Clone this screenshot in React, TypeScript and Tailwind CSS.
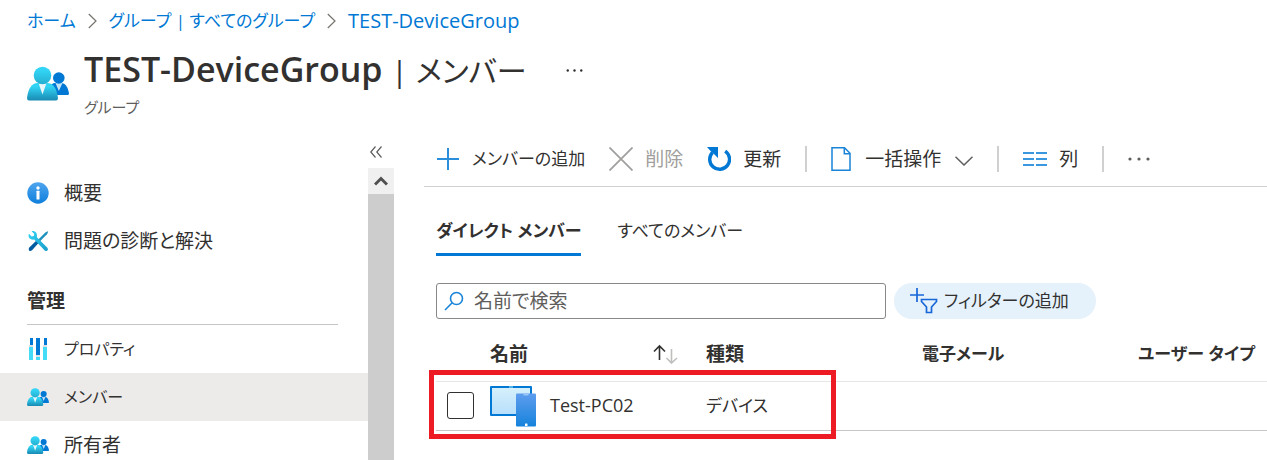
import { useId, useState } from "react";
import type { ReactNode } from "react";

function PeopleIcon({ className }: { className?: string }) {
  const id = useId();
  return (
    <svg viewBox="0 0 42 34" className={className} aria-hidden="true">
      <defs>
        <linearGradient id={`${id}b`} x1="0" y1="0" x2="0" y2="1">
          <stop offset="0.2" stopColor="#32d4f5" />
          <stop offset="1" stopColor="#198ab3" />
        </linearGradient>
        <linearGradient id={`${id}h`} x1="0" y1="0" x2="0" y2="1">
          <stop offset="0.2" stopColor="#32d4f5" />
          <stop offset="1" stopColor="#25aed0" />
        </linearGradient>
      </defs>
      <path d="M24 28.500H40.500Q42 28.500 42 27C41 20.500 38 16.500 34.500 16.500H28C25.500 16.500 24 18 22 21Z" fill="#0078d4" />
      <path d="M28.500 16.500H35.500L31.800 24.500Z" fill="#c3e4f7" />
      <circle cx="31.800" cy="11.500" r="5.800" fill="#0078d4" />
      <path d="M2 34H29Q31 34 31 31.500C30 22 26 16.500 20.500 16.500H10.500C5 16.500 1 22 0 31.500Q0 34 2 34Z" fill={`url(#${id}b)`} />
      <path d="M11.500 16.500H19.500L15.500 28Z" fill="#e9f7fb" />
      <circle cx="15.500" cy="9" r="8.800" fill={`url(#${id}h)`} />
    </svg>
  );
}

function InfoIcon() {
  return (
    <svg viewBox="0 0 22 22" className="size-[22px]" aria-hidden="true">
      <defs>
        <linearGradient id="info-bg" x1="0" y1="0" x2="0" y2="1">
          <stop offset="0" stopColor="#4fa5ee" />
          <stop offset="1" stopColor="#0f7fdc" />
        </linearGradient>
      </defs>
      <circle cx="11" cy="11" r="10.700" fill="url(#info-bg)" />
      <circle cx="11" cy="6" r="1.700" fill="#fff" />
      <rect x="9.500" y="8.800" width="3" height="8.700" rx="0.500" fill="#fff" />
    </svg>
  );
}

function ToolsIcon() {
  return (
    <svg viewBox="0 0 22 22" className="size-[22px]" aria-hidden="true">
      <defs>
        <linearGradient id="wrench" x1="0" y1="0" x2="1" y2="1">
          <stop offset="0" stopColor="#32d4f5" />
          <stop offset="1" stopColor="#1a9dc9" />
        </linearGradient>
      </defs>
      <path d="M20.800 1.200 21.200 1.800 20 4.200 11.300 13 9.600 11.300 18.300 2.500Z" fill="#2191bd" />
      <path d="M9.700 10.300 12 12.600 5 20.300Q3.300 21.600 2.100 20.400 1 19.200 2.300 17.600Z" fill="#005ba1" />
      <path d="M4.600 1.200 7.300 4 6.700 6 4.700 6.600 1.900 3.800C.7 6.900 2.600 10.300 7.200 9.600L17.700 20.400Q19.300 21.600 20.400 20.400 21.600 19.200 20.400 17.700L9.900 7.200C10.600 2.600 7.700.3 4.600 1.200Z" fill="url(#wrench)" />
    </svg>
  );
}

function PropertiesIcon() {
  return (
    <svg viewBox="0 0 22 22" className="size-[22px]" aria-hidden="true">
      <path d="M3 0H6V7H3ZM9 0H13V17H9ZM17 0H20V7H17Z" fill="#0078d4" />
      <path d="M2 9H6V22H2ZM9 19H13V22H9ZM16 9H20V22H16Z" fill="#45dcf8" />
      <path d="M2 7.500H6V8.500H2ZM9 17.500H13V18.500H9ZM16 7.500H20V8.500H16Z" fill="#b8c4cb" />
    </svg>
  );
}

function DeviceIcon() {
  return (
    <svg viewBox="0 0 46 42" className="h-[42px] w-[46px]" aria-hidden="true">
      <defs>
        <linearGradient id="screen" x1="0" y1="0" x2="0" y2="1">
          <stop offset="0" stopColor="#d5f0fb" />
          <stop offset="1" stopColor="#b8dffb" />
        </linearGradient>
        <linearGradient id="phone" x1="0" y1="0" x2="0" y2="1">
          <stop offset="0" stopColor="#5e9dee" />
          <stop offset="1" stopColor="#1683dc" />
        </linearGradient>
      </defs>
      <rect x="0" y="1" width="42" height="30" rx="1" fill="#0078d4" />
      <rect x="2" y="3" width="38" height="26" fill="url(#screen)" />
      <rect x="19" y="1.500" width="4" height="1" fill="#9fe4fb" />
      <rect x="26" y="8.500" width="20" height="33" rx="1" fill="url(#phone)" />
      <rect x="33.500" y="9.300" width="5" height="1" fill="#b7dcfa" />
      <rect x="35" y="38.500" width="2.500" height="2.500" rx="0.500" fill="#fff" />
    </svg>
  );
}

function RefreshIcon() {
  return (
    <svg viewBox="0 0 24 26" className="h-[26px] w-6" aria-hidden="true">
      <path d="M18.200 5.200A9.900 9.900 0 1 1 5.500 6.500" fill="none" stroke="#0078d4" strokeWidth="3.400" />
      <path d="M0 1H11V12L7.500 8.500 4 5.500Z" fill="#0078d4" />
    </svg>
  );
}

function FileIcon() {
  return (
    <svg viewBox="0 0 20 24" className="h-6 w-5" fill="none" stroke="#1a84d8" strokeWidth="1.500" aria-hidden="true">
      <path d="M1 .8H13.500L19 6.300V23.200H1Z" />
      <path d="M13.300 1V6.700H19" />
    </svg>
  );
}

function ColumnsIcon() {
  return (
    <svg viewBox="0 0 24 14" className="h-3.5 w-6" aria-hidden="true">
      <path d="M0 0H11V2H0ZM13 0H24V2H13ZM0 6H11V8H0ZM13 6H24V8H13ZM0 12H11V14H0ZM13 12H24V14H13Z" fill="#3b97de" />
    </svg>
  );
}

function FilterIcon() {
  return (
    <svg viewBox="0 0 28 26" className="h-[26px] w-7" fill="none" stroke="#1767d8" strokeWidth="1.700" aria-hidden="true">
      <path d="M7 0V14M0 7H14" />
      <path d="M11.500 11.500H26.500V13.500L21.500 19V24.500H16.500V19L11.500 13.500Z" />
    </svg>
  );
}

function Dots({ color, className }: { color: string; className: string }) {
  return (
    <svg viewBox="0 0 22 4" className={className} fill={color} aria-hidden="true">
      <circle cx="2" cy="2" r="1.600" />
      <circle cx="11" cy="2" r="1.600" />
      <circle cx="20" cy="2" r="1.600" />
    </svg>
  );
}

function Crumb() {
  return (
    <svg viewBox="0 0 9 16" className="h-4 w-[9px]" fill="none" stroke="#76736f" strokeWidth="1.200" aria-hidden="true">
      <path d="M.8 1 8 8 .8 15" />
    </svg>
  );
}

function Separator() {
  return <div className="ml-6 h-[26px] w-0.5 bg-[#d0d0d0]" />;
}

type NavItemProps = {
  icon: ReactNode;
  label: string;
  active?: boolean;
  small?: boolean;
};

function NavItem({ icon, label, active, small }: NavItemProps) {
  return (
    <li>
      <a
        href="#"
        aria-current={active ? "page" : undefined}
        className={`flex h-12 items-center gap-[15px] pl-[27px] ${small ? "text-[16px]" : "text-[19px]"} ${active ? "bg-[#edebe9]" : ""}`}
      >
        {icon}
        <span>{label}</span>
      </a>
    </li>
  );
}

const menuPeople = <PeopleIcon className="h-[18px] w-[22px]" />;

export default function App() {
  const [search, setSearch] = useState("");
  const [checked, setChecked] = useState(false);

  return (
    <div className="flex h-screen flex-col overflow-hidden bg-white font-['Open_Sans','Noto_Sans_CJK_JP',sans-serif] text-[#323130] [font-feature-settings:'palt'] [&_*]:whitespace-nowrap">
      <header className="shrink-0">
        <nav aria-label="breadcrumb" className="flex h-[42px] items-center gap-3 pl-[27px] text-[17px] text-[#0078d4]">
          <a href="#">ホーム</a>
          <Crumb />
          <a href="#">グループ | すべてのグループ</a>
          <Crumb />
          <a href="#" className="text-[20px]">TEST-DeviceGroup</a>
        </nav>
        <div className="flex h-[90px] items-start pl-[27px]">
          <PeopleIcon className="mt-6 h-[35px] w-[42px]" />
          <div className="ml-[15px]">
            <div className="flex h-14 items-center gap-10">
              <h1 className="text-[34px] leading-[56px] font-semibold">
                TEST-DeviceGroup <span className="text-[30px] font-normal">| メンバー</span>
              </h1>
              <button type="button" aria-label="その他">
                <Dots color="#323130" className="h-[3px] w-[17px]" />
              </button>
            </div>
            <p className="text-[15px] leading-[18px] text-[#605e5c]">グループ</p>
          </div>
        </div>
      </header>

      <div className="flex min-h-0 flex-1">
        <aside className="flex w-[394px] shrink-0 flex-col">
          <div className="flex h-9 shrink-0 items-center justify-end pr-3">
            <button type="button" aria-label="折りたたむ">
              <svg viewBox="0 0 12 12" className="mt-1 size-3" fill="none" stroke="#605e5c" strokeWidth="1.200">
                <path d="M5.500.5.800 6 5.500 11.500M11.500.5 6.800 6 11.500 11.500" />
              </svg>
            </button>
          </div>
          <div className="flex min-h-0 flex-1">
            <nav className="flex-1 overflow-hidden pt-px">
              <ul>
                <NavItem icon={<InfoIcon />} label="概要" />
                <NavItem icon={<ToolsIcon />} label="問題の診断と解決" />
              </ul>
              <h2 className="mr-[30px] ml-[27px] h-[60px] border-b border-[#c8c6c4] pt-5 text-[19px] leading-8 font-bold">管理</h2>
              <ul>
                <NavItem icon={<PropertiesIcon />} label="プロパティ" small />
                <NavItem icon={menuPeople} label="メンバー" active small />
                <NavItem icon={menuPeople} label="所有者" />
              </ul>
            </nav>
            <div className="w-[26px] bg-[#cdcdcd]">
              <div className="flex h-[26px] items-center justify-center bg-[#f0f0f0]">
                <svg viewBox="0 0 14 10" className="h-2.5 w-3.5" fill="none" stroke="#505050" strokeWidth="3" aria-hidden="true">
                  <path d="M1 8.500 7 2.500 13 8.500" />
                </svg>
              </div>
            </div>
          </div>
        </aside>

        <main className="ml-[30px] min-w-0 flex-1">
          <div className="flex h-[55px] items-center border-b border-[#d2d0ce] pl-3 text-[19px]">
            <button type="button" className="flex items-center gap-3 text-[17px]">
              <svg viewBox="0 0 24 24" className="size-6" stroke="#2b8edb" strokeWidth="2" aria-hidden="true">
                <path d="M12 1V23M1 12H23" />
              </svg>
              メンバーの追加
            </button>
            <button type="button" disabled className="ml-6 flex items-center gap-3 text-[#a19f9d]">
              <svg viewBox="0 0 24 24" className="size-6" stroke="#a19f9d" strokeWidth="1.800" aria-hidden="true">
                <path d="M.5.5 23.500 23.500M23.500.5.5 23.500" />
              </svg>
              削除
            </button>
            <button type="button" className="ml-6 flex items-center gap-3">
              <RefreshIcon />
              更新
            </button>
            <Separator />
            <button type="button" className="ml-6 flex items-center gap-3.5">
              <FileIcon />
              一括操作
              <svg viewBox="0 0 18 10" className="mt-1 h-2.5 w-[18px]" fill="none" stroke="#605e5c" strokeWidth="1.500" aria-hidden="true">
                <path d="M.5.8 9 9 17.500.8" />
              </svg>
            </button>
            <Separator />
            <button type="button" className="ml-6 flex items-center gap-3">
              <ColumnsIcon />
              列
            </button>
            <Separator />
            <button type="button" aria-label="その他のコマンド" className="ml-6">
              <Dots color="#605e5c" className="h-1 w-[22px]" />
            </button>
          </div>

          <div className="pl-3">
            <div role="tablist" className="flex gap-9 pt-6 text-[17px] leading-10">
              <button type="button" role="tab" aria-selected="true" className="border-b-3 border-[#0078d4] pb-0.5 font-bold">
                ダイレクト メンバー
              </button>
              <button type="button" role="tab" aria-selected="false" className="border-b-3 border-transparent pb-0.5">
                すべてのメンバー
              </button>
            </div>

            <div className="mt-[27px] flex gap-2">
              <label className="flex h-9 w-[450px] items-center gap-2.5 rounded-[3px] border border-[#8a8886] px-[7px]">
                <svg viewBox="0 0 20 20" className="size-5" fill="none" stroke="#1a84d8" strokeWidth="1.600" aria-hidden="true">
                  <circle cx="12.500" cy="7.500" r="6" />
                  <path d="M8.200 11.800 1 19" />
                </svg>
                <input
                  type="text"
                  aria-label="名前で検索"
                  placeholder="名前で検索"
                  value={search}
                  onChange={(e) => setSearch(e.target.value)}
                  className="min-w-0 flex-1 text-[19px] outline-none placeholder:text-[#605e5c]"
                />
              </label>
              <button type="button" className="flex h-9 items-center gap-1.5 rounded-full bg-[#e5f1fb] pr-[27px] pl-4 text-[17px]">
                <FilterIcon />
                フィルターの追加
              </button>
            </div>

            <div className="relative">
              <table className="w-full table-fixed text-left text-[17px]">
                <colgroup>
                  <col className="w-[54px]" />
                  <col className="w-[26%]" />
                  <col className="w-[26%]" />
                  <col className="w-[26%]" />
                  <col />
                </colgroup>
                <thead>
                  <tr className="h-[62px] border-b border-[#e8e6e4]">
                    <th />
                    <th className="pt-2 text-[19px] font-bold">
                      <div className="flex items-center justify-between pr-7">
                        名前
                        <svg viewBox="0 0 25 20" className="h-5 w-[25px]" fill="none" strokeWidth="1.600" aria-label="並べ替え">
                          <path d="M6.500 16V2M1 7.500 6.500 2 12 7.500" stroke="#323130" />
                          <path d="M18.500 5V19M13.500 14 18.500 19 24 14" stroke="#c0bebc" />
                        </svg>
                      </div>
                    </th>
                    <th className="pt-2 text-[19px] font-bold">種類</th>
                    <th className="pt-2 font-bold">電子メール</th>
                    <th className="pt-2 font-bold">ユーザー タイプ</th>
                  </tr>
                </thead>
                <tbody>
                  <tr className="h-[49px] border-b border-[#c8c6c4]">
                    <td className="pl-[11px]">
                      <input
                        type="checkbox"
                        aria-label="Test-PC02"
                        checked={checked}
                        onChange={(e) => setChecked(e.target.checked)}
                        className="block size-[27px] appearance-none rounded-[3px] border border-[#323130] checked:bg-[#0078d4]"
                      />
                    </td>
                    <td className="text-[18px]">
                      <div className="flex items-center gap-3.5">
                        <DeviceIcon />
                        Test-PC02
                      </div>
                    </td>
                    <td>デバイス</td>
                    <td />
                    <td />
                  </tr>
                </tbody>
              </table>
              {/* highlight around the selected member */}
              <div className="pointer-events-none absolute top-[51px] -left-[7px] h-[69px] w-[407px] border-5 border-[#ed1c24]" />
            </div>
          </div>
        </main>
      </div>
    </div>
  );
}
